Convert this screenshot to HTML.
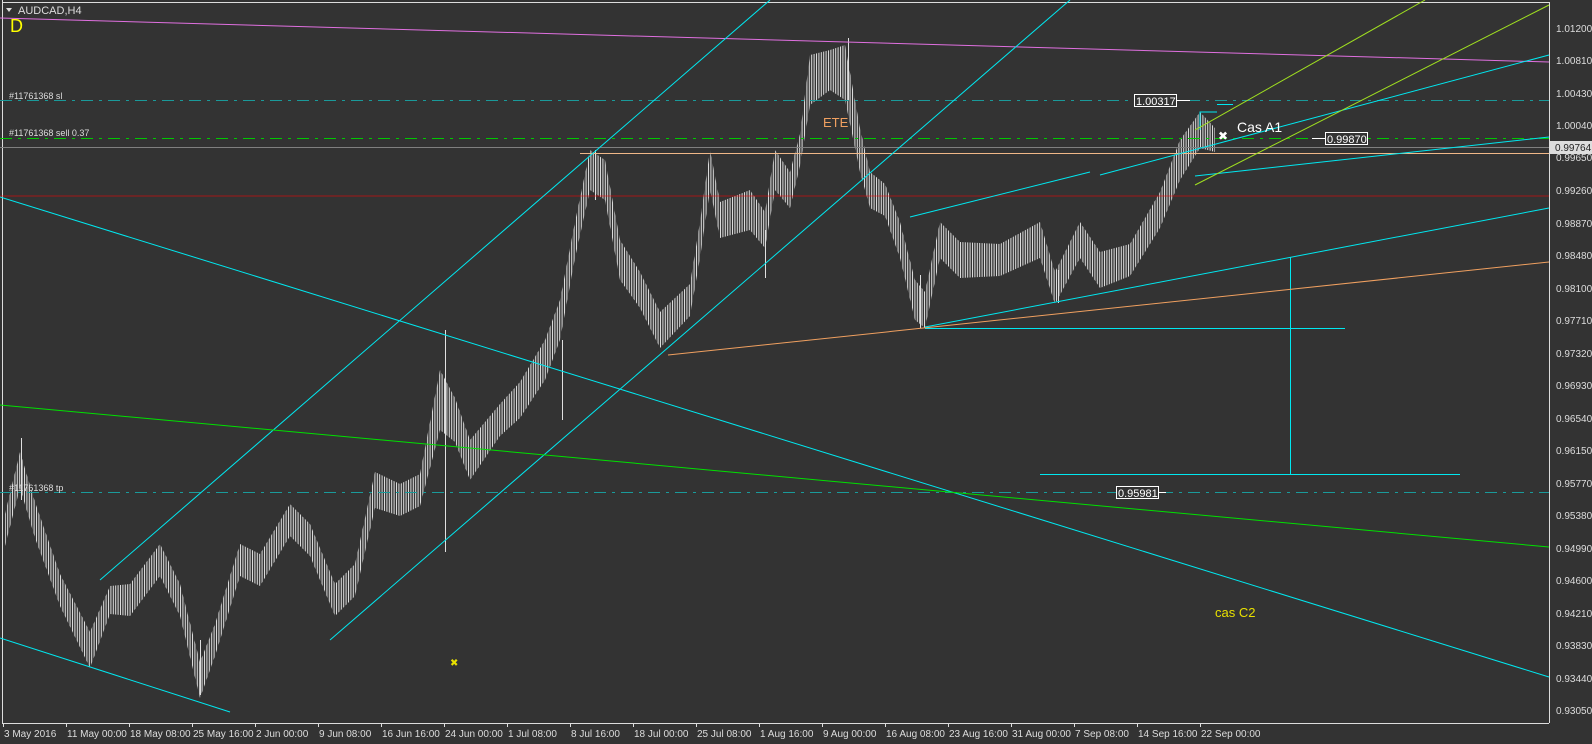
<!DOCTYPE html><html><head><style>
body{margin:0;background:#333;width:1592px;height:744px;overflow:hidden;font-family:"Liberation Sans",sans-serif}
svg{display:block}
</style></head><body>
<svg width="1592" height="744" xmlns="http://www.w3.org/2000/svg" font-family="Liberation Sans, sans-serif">
<defs>
<pattern id="bp" patternUnits="userSpaceOnUse" width="2.4" height="10">
<rect x="0" y="0" width="1" height="10" fill="#e0e0e0"/>
</pattern>
</defs>
<rect width="1592" height="744" fill="#333"/>
<line x1="2.5" y1="0" x2="2.5" y2="723" stroke="#ddd"/>
<line x1="2" y1="2.5" x2="1549" y2="2.5" stroke="#ddd"/>
<line x1="1549.5" y1="2" x2="1549.5" y2="723" stroke="#ddd"/>
<line x1="2" y1="723.5" x2="1549" y2="723.5" stroke="#ddd"/>
<polygon fill="url(#bp)" points="5,514 20,452 35,502 60,574 90,632 110,586 130,584 160,544 180,584 200,662 215,624 240,544 260,554 290,504 310,524 335,584 355,564 375,472 400,484 420,474 440,370 455,398 470,440 500,404 520,382 545,340 560,300 575,222 590,150 605,160 620,240 640,272 660,312 690,284 700,222 710,150 720,202 750,190 765,212 775,150 790,172 800,134 810,55 830,50 845,45 860,128 870,172 885,184 900,222 915,280 925,292 940,222 960,242 1000,244 1040,222 1055,272 1080,222 1100,252 1130,244 1160,192 1180,140 1200,112 1215,128 1215,152 1200,148 1180,180 1160,228 1130,276 1100,288 1080,258 1055,304 1040,258 1000,276 960,278 940,258 925,328 915,320 900,258 885,216 870,208 860,172 845,100 830,90 810,105 800,166 790,208 775,190 765,248 750,230 720,238 710,190 700,258 690,316 660,348 640,308 620,280 605,200 590,190 575,258 560,340 545,380 520,418 500,436 470,480 455,442 440,430 420,506 400,516 375,508 355,596 335,616 310,556 290,536 260,586 240,576 215,656 200,698 180,616 160,576 130,616 110,614 90,668 60,606 35,538 20,488 5,546"/>
<g stroke="#e0e0e0" stroke-width="1">
<line x1="445.5" y1="330" x2="445.5" y2="552"/>
<line x1="21.5" y1="438" x2="21.5" y2="500"/>
<line x1="200.5" y1="640" x2="200.5" y2="695"/>
<line x1="595.5" y1="150" x2="595.5" y2="200"/>
<line x1="848.5" y1="38" x2="848.5" y2="100"/>
<line x1="765.5" y1="230" x2="765.5" y2="278"/>
<line x1="562.5" y1="420" x2="562.5" y2="340"/>
<line x1="920.5" y1="275" x2="920.5" y2="328"/>
<line x1="1058.5" y1="270" x2="1058.5" y2="303"/>
</g>
<g fill="none" stroke-width="1">
<line x1="0" y1="196" x2="1549" y2="196" stroke="#ff0000" stroke-opacity="0.55"/>
<line x1="0" y1="147.5" x2="1549" y2="147.5" stroke="#808080"/>
<line x1="580" y1="153.5" x2="1549" y2="153.5" stroke="#f0b888"/>
<line x1="0" y1="100.5" x2="1549" y2="100.5" stroke="#1a9a9a" stroke-dasharray="12,6,3,6"/>
<line x1="0" y1="138.5" x2="1549" y2="138.5" stroke="#00c800" stroke-dasharray="12,6,3,6"/>
<line x1="0" y1="492.5" x2="1549" y2="492.5" stroke="#1a9a9a" stroke-dasharray="12,6,3,6"/>
<line x1="0" y1="18" x2="1549" y2="62" stroke="#e070e0"/>
<g stroke="#00e8f0">
<line x1="100" y1="580" x2="770" y2="0"/>
<line x1="330" y1="640" x2="1070" y2="0"/>
<line x1="0" y1="197" x2="1549" y2="677"/>
<line x1="0" y1="638" x2="230" y2="712"/>
<line x1="910" y1="217" x2="1090" y2="172"/>
<line x1="925" y1="327" x2="1549" y2="208"/>
<line x1="1100" y1="175" x2="1549" y2="55"/>
<line x1="1195" y1="176" x2="1549" y2="137"/>
<line x1="925" y1="328.5" x2="1345" y2="328.5"/>
<line x1="1040" y1="474.5" x2="1460" y2="474.5"/>
<line x1="1290.5" y1="257" x2="1290.5" y2="474"/>
<line x1="1217" y1="104.5" x2="1233" y2="104.5"/>
<polyline points="1217,112 1200,112 1200,130"/>
</g>
<line x1="0" y1="405" x2="1549" y2="547" stroke="#00e000"/>
<line x1="668" y1="355" x2="1549" y2="262" stroke="#f0a060"/>
<g stroke="#a0e020">
<line x1="1195" y1="130" x2="1425" y2="0"/>
<line x1="1195" y1="185" x2="1549" y2="5"/>
</g>
</g>
<text x="823" y="127" fill="#f0a060" font-size="13">ETE</text>
<text x="1237" y="132" fill="#fff" font-size="14">Cas A1</text>
<text x="1215" y="617" fill="#e8e000" font-size="13">cas C2</text>
<text x="1218" y="140" fill="#fff" font-size="12">✖</text>
<text x="450" y="666" fill="#e8e000" font-size="10">✖</text>
<text x="10" y="32" fill="#ffff00" font-size="18">D</text>
<polygon points="6,8 12,8 9,12" fill="#ddd"/>
<text x="18" y="14" fill="#ddd" font-size="11">AUDCAD,H4</text>
<g fill="#ddd" font-size="9">
<text x="9" y="99">#11761368 sl</text>
<text x="9" y="136">#11761368 sell 0.37</text>
<text x="9" y="491">#11761368 tp</text>
</g>
<g font-size="11" fill="#fff">
<rect x="1134.5" y="94.5" width="42" height="12" fill="#333" stroke="#fff"/><text x="1136" y="105">1.00317</text>
<line x1="1177" y1="100.5" x2="1190" y2="100.5" stroke="#fff"/>
<rect x="1325.5" y="132.5" width="42" height="12" fill="#333" stroke="#fff"/><text x="1327" y="143">0.99870</text>
<line x1="1312" y1="138.5" x2="1325" y2="138.5" stroke="#fff"/>
<rect x="1116.5" y="486.5" width="42" height="12" fill="#333" stroke="#fff"/><text x="1118" y="497">0.95981</text>
<line x1="1159" y1="492.5" x2="1166" y2="492.5" stroke="#fff"/>
</g>
<g fill="#ddd" font-size="10">
<text x="1556" y="32">1.01200</text>
<text x="1556" y="64">1.00810</text>
<text x="1556" y="97">1.00430</text>
<text x="1556" y="129">1.00040</text>
<text x="1556" y="161">0.99650</text>
<text x="1556" y="194">0.99260</text>
<text x="1556" y="227">0.98870</text>
<text x="1556" y="259">0.98480</text>
<text x="1556" y="292">0.98100</text>
<text x="1556" y="324">0.97710</text>
<text x="1556" y="357">0.97320</text>
<text x="1556" y="389">0.96930</text>
<text x="1556" y="422">0.96540</text>
<text x="1556" y="454">0.96150</text>
<text x="1556" y="487">0.95770</text>
<text x="1556" y="519">0.95380</text>
<text x="1556" y="552">0.94990</text>
<text x="1556" y="584">0.94600</text>
<text x="1556" y="617">0.94210</text>
<text x="1556" y="649">0.93830</text>
<text x="1556" y="682">0.93440</text>
<text x="1556" y="714">0.93050</text>
</g>
<rect x="1550" y="141" width="42" height="13" fill="#ddd"/>
<text x="1555" y="151" fill="#222" font-size="10">0.99764</text>
<g stroke="#ddd">
<path d="M3.5 723v4M66.5 723v4M129.5 723v4M192.5 723v4M255.5 723v4M318.5 723v4M381.5 723v4M444.5 723v4M507.5 723v4M570.5 723v4M633.5 723v4M696.5 723v4M759.5 723v4M822.5 723v4M885.5 723v4M948.5 723v4M1011.5 723v4M1074.5 723v4M1137.5 723v4M1200.5 723v4"/>
</g>
<g fill="#ddd" font-size="10">
<text x="4" y="737">3 May 2016</text>
<text x="67" y="737">11 May 00:00</text>
<text x="130" y="737">18 May 08:00</text>
<text x="193" y="737">25 May 16:00</text>
<text x="256" y="737">2 Jun 00:00</text>
<text x="319" y="737">9 Jun 08:00</text>
<text x="382" y="737">16 Jun 16:00</text>
<text x="445" y="737">24 Jun 00:00</text>
<text x="508" y="737">1 Jul 08:00</text>
<text x="571" y="737">8 Jul 16:00</text>
<text x="634" y="737">18 Jul 00:00</text>
<text x="697" y="737">25 Jul 08:00</text>
<text x="760" y="737">1 Aug 16:00</text>
<text x="823" y="737">9 Aug 00:00</text>
<text x="886" y="737">16 Aug 08:00</text>
<text x="949" y="737">23 Aug 16:00</text>
<text x="1012" y="737">31 Aug 00:00</text>
<text x="1075" y="737">7 Sep 08:00</text>
<text x="1138" y="737">14 Sep 16:00</text>
<text x="1201" y="737">22 Sep 00:00</text>
</g>
</svg>
</body></html>
